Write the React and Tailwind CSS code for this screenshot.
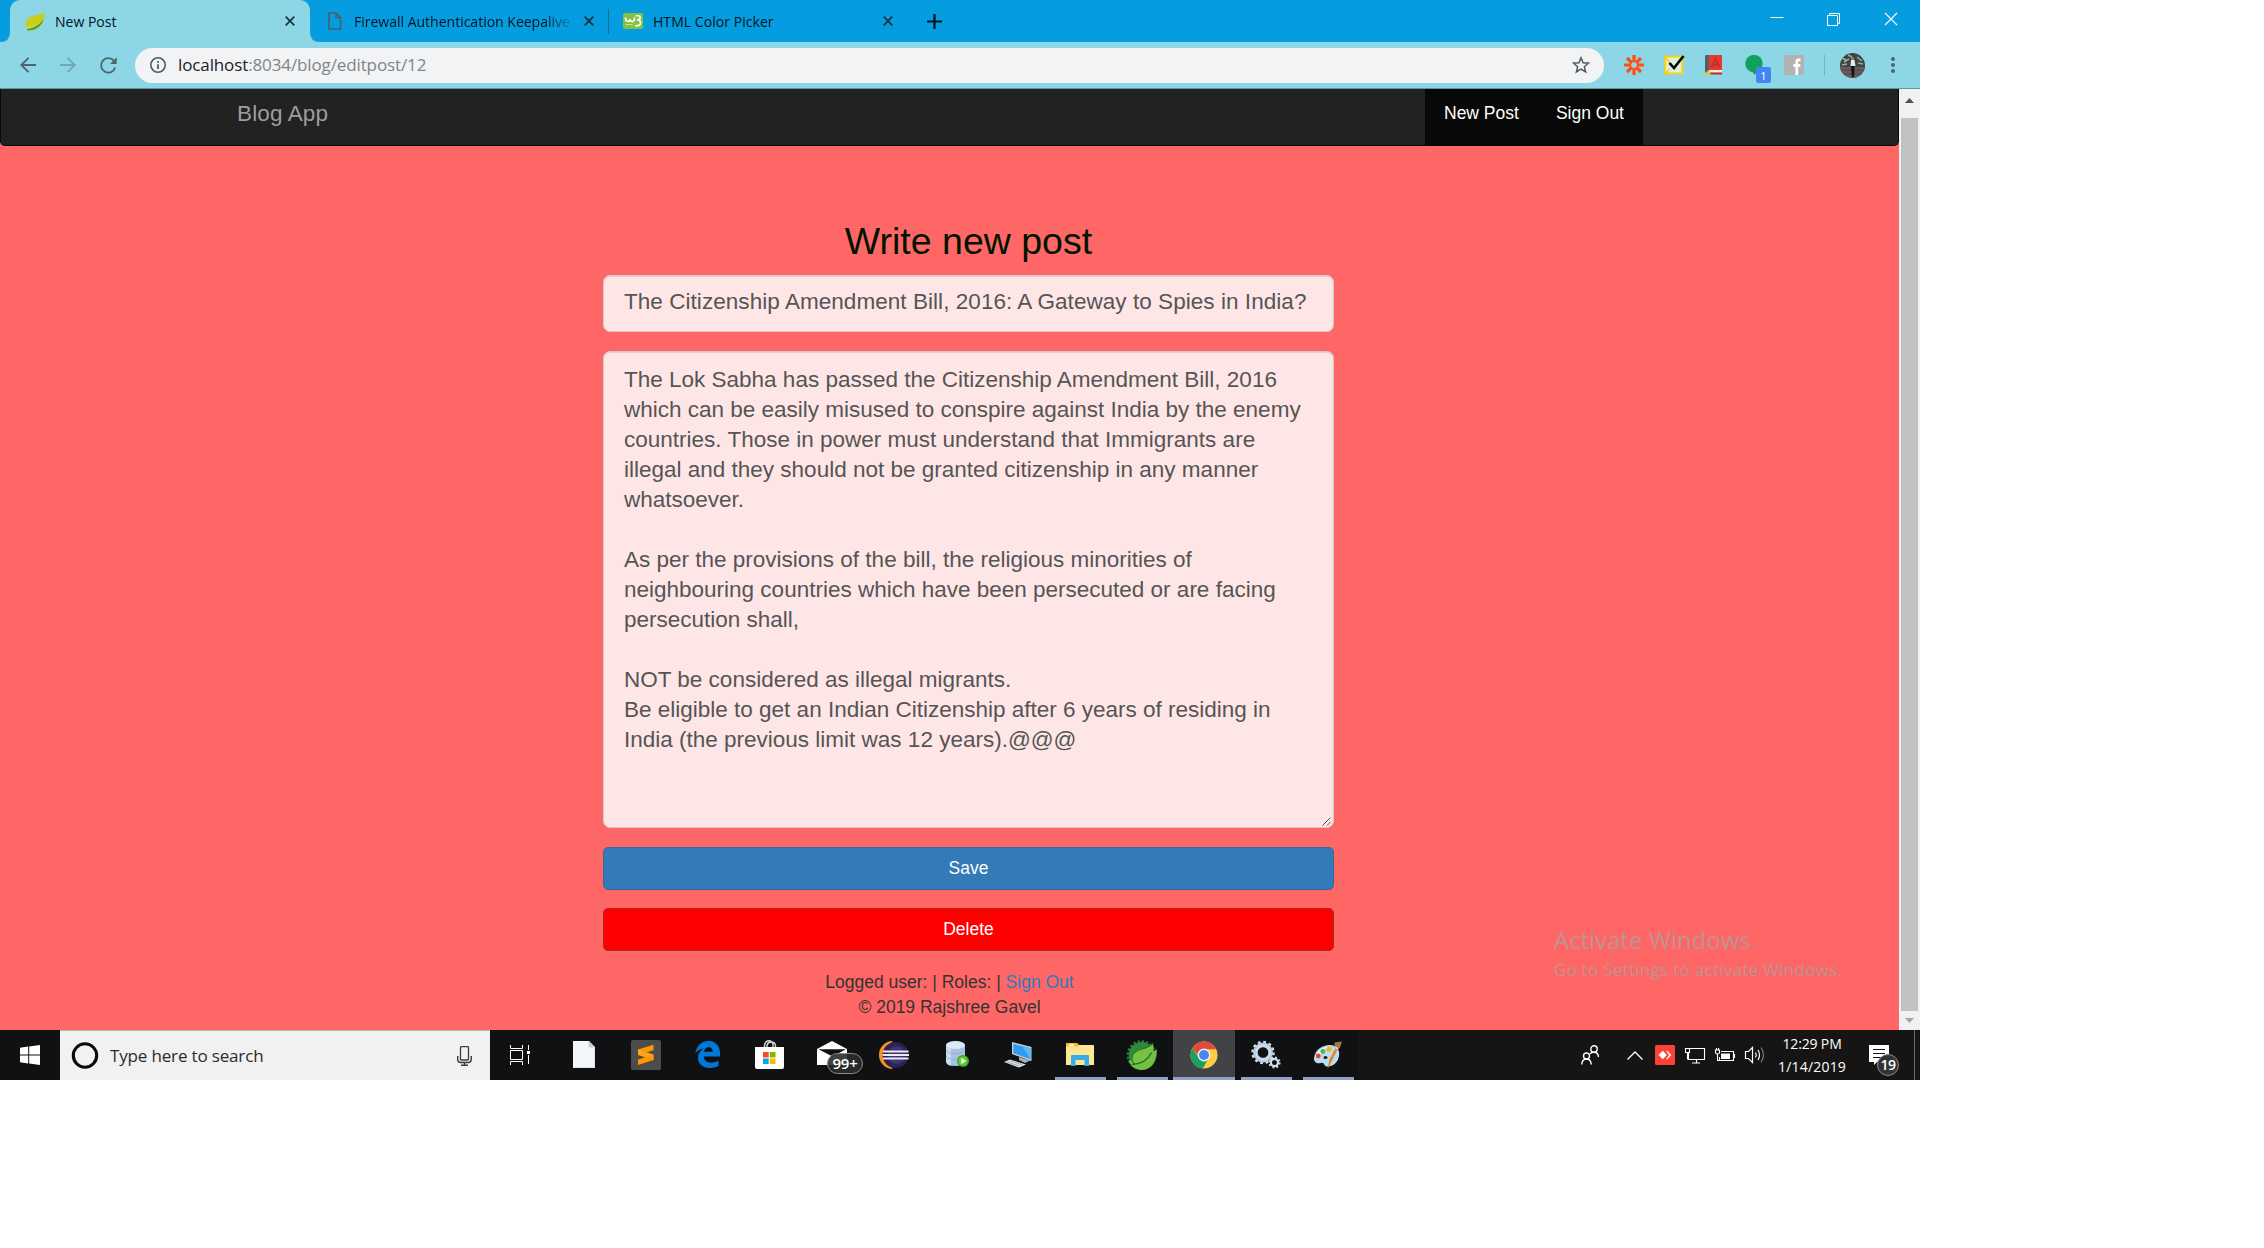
import React from "react";

const BODY_TEXT = `The Lok Sabha has passed the Citizenship Amendment Bill, 2016
which can be easily misused to conspire against India by the enemy
countries. Those in power must understand that Immigrants are
illegal and they should not be granted citizenship in any manner
whatsoever.

As per the provisions of the bill, the religious minorities of
neighbouring countries which have been persecuted or are facing
persecution shall,

NOT be considered as illegal migrants.
Be eligible to get an Indian Citizenship after 6 years of residing in
India (the previous limit was 12 years).@@@`;

function Svg({ w, h, className = "", children }) {
  return (
    <svg width={w} height={h} viewBox={`0 0 ${w} ${h}`} fill="none" className={`block shrink-0 overflow-visible ${className}`}>
      {children}
    </svg>
  );
}

function CloseX({ className }) {
  return (
    <Svg w={10} h={10} className={className}>
      <path d="M0.7 0.7 9.3 9.3M9.3 0.7 0.7 9.3" stroke="#17333d" strokeWidth="1.7" />
    </Svg>
  );
}

/* ---------- browser chrome ---------- */

function TabStrip() {
  return (
    <div className="flex h-[42px] items-stretch bg-[#059de0] text-[14px] text-[#04141c]">
      <div className="flex w-[10px] items-end">
        <Svg w={10} h={10}><path d="M10 0V10H0Q10 10 10 0Z" fill="#8dd6e6" /></Svg>
      </div>
      <div className="flex w-[300px] items-center rounded-t-[10px] bg-[#8dd6e6] pl-[15px]">
        <Svg w={20} h={20}>
          <path d="M19.500 1C17 3.500 13 3.500 9 4.500C3 6 0 9.500 1 14C1.500 17 3 18.500 6 18.500C14 19 20.500 12 19.500 1Z" fill="#c3d01c" />
          <path d="M1.500 18C9 17.500 14 14 18.500 8C16.500 15.500 10.500 20 2.500 19.500Z" fill="#5f9a22" />
          <path d="M2.500 16.500C8 16 12 14 15.500 10.500" stroke="#e0e45a" strokeWidth="0.8" />
        </Svg>
        <span className="ml-[10px] w-[230px]">New Post</span>
        <CloseX />
      </div>
      <div className="flex w-[300px] items-center">
        <div className="flex h-full w-[10px] items-end">
          <Svg w={10} h={10}><path d="M0 0V10H10Q0 10 0 0Z" fill="#8dd6e6" /></Svg>
        </div>
        <Svg w={14} h={18} className="ml-[8px]">
          <path d="M1 1H8L12.500 5.500V17H1ZM8 1V5.500H12.500" stroke="#4c5e68" strokeWidth="1.6" />
        </Svg>
        <span className="ml-[12px] w-[218px] overflow-hidden whitespace-nowrap bg-gradient-to-r from-[#04141c] from-88% to-[#0590ce] bg-clip-text text-transparent">
          Firewall Authentication Keepalive
        </span>
        <CloseX className="ml-[12px]" />
        <div className="ml-[14px] h-[25px] w-px bg-[#08719e]" />
      </div>
      <div className="flex w-[302px] items-center pl-[13px]">
        <div className="flex h-[16px] w-[20px] flex-col items-center overflow-hidden rounded-[2px] bg-[#84c341]">
          <Svg w={20} h={16}>
            <path d="M2.500 4.500Q2.500 8.500 5 8.500Q7 8.500 7 6Q7 8.500 9.500 8.500Q11.500 8.500 11.500 4.500M12.500 2.800H15.500Q17.800 3.200 17 5.500L15 6.800Q18 7.500 17.500 10.500Q17 13 12 12.800" stroke="#fff" strokeWidth="1.6" />
            <path d="M3 11.500H10" stroke="#dcefc4" strokeWidth="1.200" strokeDasharray="1.200 0.500" />
          </Svg>
        </div>
        <span className="ml-[10px] w-[230px] whitespace-nowrap tracking-[0.05px]">HTML Color Picker</span>
        <CloseX />
      </div>
      <div className="flex flex-1 items-center pl-[15px]">
        <Svg w={15} h={15}><path d="M7.500 0V15M0 7.500H15" stroke="#04141c" strokeWidth="2.200" /></Svg>
      </div>
      <div className="flex h-[37px] items-center gap-[43px] pr-[22px]">
        <Svg w={14} h={14}><path d="M0.500 5.500H13.500" stroke="#fff" /></Svg>
        <Svg w={14} h={14}>
          <path d="M0.500 3.500H10.500V13.500H0.500ZM2.500 3.500V1.500H12.500V11.500H10.500" stroke="#fff" />
        </Svg>
        <Svg w={14} h={14}><path d="M1 1 13 13M13 1 1 13" stroke="#fff" strokeWidth="1.100" /></Svg>
      </div>
    </div>
  );
}

function Toolbar() {
  return (
    <div className="flex h-[47px] items-center border-b border-[#5b97a4] bg-[#8dd6e6] pl-[20px]">
      <Svg w={16} h={16}><path d="M8.500 0.800 1.300 8 8.500 15.200M1.300 8H16" stroke="#4d666e" strokeWidth="1.900" /></Svg>
      <Svg w={16} h={16} className="ml-[24px]">
        <path d="M7.500 0.800 14.700 8 7.500 15.200M14.700 8H0" stroke="#72a8b5" strokeWidth="1.900" />
      </Svg>
      <Svg w={17} h={17} className="ml-[24px]">
        <path d="M13.800 3.700A7.200 7.200 0 1 0 15.200 10.500" stroke="#4d666e" strokeWidth="1.900" />
        <path d="M16.700 0.300V7H10Z" fill="#4d666e" />
      </Svg>
      <div className="ml-[18px] flex h-[35px] w-[1469px] items-center rounded-full bg-[#f1f3f5] pl-[15px] pr-[14px]">
        <Svg w={16} h={16}>
          <circle cx="8" cy="8" r="7.200" stroke="#55595d" strokeWidth="1.600" />
          <path d="M8 7.200V12M8 4V5.700" stroke="#55595d" strokeWidth="1.800" />
        </Svg>
        <span className="ml-[12px] flex-1 text-[17px] tracking-[-0.12px] text-[#808488]">
          <span className="text-[#202124]">localhost</span>:8034/blog/editpost/12
        </span>
        <Svg w={18} h={18}>
          <path d="M9 1.800 11 6.800 16.400 7.200 12.300 10.700 13.600 16 9 13.100 4.400 16 5.700 10.700 1.600 7.200 7 6.800Z" stroke="#55595d" strokeWidth="1.500" />
        </Svg>
      </div>
      <Svg w={20} h={20} className="ml-[20px]">
        <path d="M10 0V7M10 13V20M0 10H7M13 10H20M3 3 7.900 7.900M12.100 12.100 17 17M17 3 12.100 7.900M7.900 12.100 3 17" stroke="#ff4f12" strokeWidth="3.200" />
        <circle cx="10" cy="10" r="3.700" stroke="#ff4f12" strokeWidth="1.600" />
      </Svg>
      <Svg w={20} h={20} className="ml-[20px]">
        <rect x="1" y="1.500" width="17.500" height="17" fill="#ddf0d8" stroke="#f6d11c" strokeWidth="2" />
        <path d="M1 2 6 8M1 18.500 6 14" stroke="#f6d11c" strokeWidth="1.500" />
        <path d="M5.500 8 10 13 19.500 1" stroke="#000" strokeWidth="2.600" />
      </Svg>
      <Svg w={18} h={20} className="ml-[21px]">
        <path d="M0 1Q0 0 1 0H4V20H0Z" fill="#55616a" />
        <path d="M4 0H17V15H4Z" fill="#e63a30" />
        <path d="M4 15H17V17.500H5Z" fill="#f7efe4" />
        <path d="M4 17.500H17V19.500H4Z" fill="#c62a23" />
        <path d="M0 18 4 15 6 20H0Z" fill="#ecc534" />
        <path d="M6.500 12 10.500 4 14.500 12M8 9.500H13" stroke="#c22c25" strokeWidth="1.600" />
      </Svg>
      <div className="relative ml-[22px] h-[20px] w-[20px]">
        <Svg w={20} h={20}>
          <circle cx="9" cy="8.500" r="8.700" fill="#12a05c" />
          <path d="M6 14H14L9.500 20Z" fill="#12a05c" />
        </Svg>
        <span className="absolute left-[11px] top-[12px] flex h-[16px] w-[15px] items-center justify-center rounded-[2px] bg-[#4285f4] text-[11px] leading-none text-white">1</span>
      </div>
      <Svg w={20} h={20} className="ml-[19px]">
        <rect width="20" height="20" fill="#b2b2b2" />
        <path d="M16.500 4.800H14.500Q12.800 4.800 12.800 6.800V20M9.300 10.500H16.300" stroke="#fff" strokeWidth="2.800" />
      </Svg>
      <div className="ml-[20px] h-[20px] w-px bg-[#6fb5c4]" />
      <Svg w={25} h={25} className="ml-[15px]">
        <clipPath id="avatar"><circle cx="12.500" cy="12.500" r="12.500" /></clipPath>
        <g clipPath="url(#avatar)">
          <rect width="25" height="25" fill="#3c4540" />
          <path d="M0 14H25V25H0Z" fill="#6b5a60" />
          <path d="M2 5 6 7M4 9 9 6M17 4 22 8M18 10 23 11M8 2 12 4M2 12 7 11" stroke="#9eaaa4" strokeWidth="1.500" />
          <path d="M0 17H25M0 21H25" stroke="#4b4048" strokeWidth="1" />
          <path d="M11 7H14.500L15.500 13H10.500Z" fill="#e8e8ea" />
          <circle cx="12.500" cy="5.500" r="1.600" fill="#a87c6b" />
          <path d="M11 13H14.500L14 24H12Z" fill="#111" />
        </g>
      </Svg>
      <Svg w={4} h={16} className="ml-[26px]">
        <circle cx="2" cy="2" r="2" fill="#4d666e" />
        <circle cx="2" cy="8" r="2" fill="#4d666e" />
        <circle cx="2" cy="14" r="2" fill="#4d666e" />
      </Svg>
    </div>
  );
}

/* ---------- page ---------- */

function BlogPage() {
  return (
    <div className="relative flex w-[1899px] flex-col bg-[#ff6666] font-['Liberation_Sans',Arial,sans-serif] text-[17.5px]">
      <nav className="flex h-[57px] rounded-b-[5px] border-x border-b border-[#080808] bg-[#222222]">
        <span className="ml-[236px] w-[1188px] pt-[9px] text-[22.5px] leading-[32px] tracking-[0.12px] text-[#9d9d9d]">Blog App</span>
        <div className="flex w-[218px] bg-[#080808] pt-[12px] leading-[25px] text-white">
          <span className="pl-[19px] pr-[18px]">New Post</span>
          <span className="pl-[19px]">Sign Out</span>
        </div>
      </nav>

      <main className="ml-[603px] mt-[74px] flex w-[731px] flex-col">
        <h1 className="text-center text-[37.5px] leading-[42px] text-[#001400]">Write new post</h1>
        <div className="mt-[13px] h-[57px] rounded-[7px] border border-[#cccccc] bg-[#ffe6e6] pl-[20px] pt-[11px] text-[22.5px] leading-[30px] tracking-[0.05px] text-[#555555] shadow-[inset_0_1px_1px_rgba(0,0,0,0.12)]">
          The Citizenship Amendment Bill, 2016: A Gateway to Spies in India?
        </div>
        <div className="relative mt-[19px] h-[477px] whitespace-pre rounded-[7px] border border-[#cccccc] bg-[#ffe6e6] pl-[20px] pt-[13px] text-[22.5px] leading-[30px] text-[#555555] shadow-[inset_0_1px_1px_rgba(0,0,0,0.12)]">
          {BODY_TEXT}
          <Svg w={9} h={9} className="absolute bottom-px right-[2px]">
            <path d="M0.500 8.500 8.500 0.500M5 8.500 8.500 5" stroke="#555" />
          </Svg>
        </div>
        <button className="mt-[19px] h-[43px] rounded-[5px] border border-[#2e6da4] bg-[#337ab7] pb-[1px] text-white">Save</button>
        <button className="mt-[18px] h-[43px] rounded-[5px] border border-[#a02c2c] bg-[#ff0000] pb-[1px] text-white">Delete</button>
      </main>

      <footer className="mt-[19px] text-center leading-[25px] text-[#333333]">
        <div>Logged user: | Roles: | <span className="text-[#337ab7]">Sign Out</span></div>
        <div>© 2019 Rajshree Gavel</div>
      </footer>

      <div className="absolute left-[1554px] top-[834px] whitespace-nowrap font-['Open_Sans','Noto_Sans',sans-serif] text-[#bd9393]">
        <div className="text-[24px] leading-[34px]">Activate Windows</div>
        <div className="text-[17px] leading-[26px] tracking-[0.28px]">Go to Settings to activate Windows.</div>
      </div>
    </div>
  );
}

function Scrollbar() {
  return (
    <div className="flex w-[21px] flex-col items-center bg-[#f1f1f1]">
      <div className="flex h-[29px] items-start pt-[9px]">
        <Svg w={9} h={5}><path d="M0 5 4.500 0 9 5Z" fill="#505050" /></Svg>
      </div>
      <div className="h-[893px] w-[17px] bg-[#c1c1c1]" />
      <Svg w={9} h={5} className="mt-[7px]"><path d="M0 0H9L4.500 5Z" fill="#a3a3a3" /></Svg>
    </div>
  );
}

/* ---------- taskbar ---------- */

function TaskViewIcon() {
  return (
    <Svg w={20} h={20} className="mr-[4px]">
      <path d="M0.500 5.500H12.500V14.500H0.500ZM0.500 0V3.500M12.500 0V3.500M0.500 3.500H12.500M0.500 16.500H12.500M0.500 16.500V20M12.500 16.500V20M18.500 0V5M18.500 10V19" stroke="#fff" />
      <rect x="17" y="6" width="3" height="3" fill="#fff" />
    </Svg>
  );
}

function DocIcon() {
  return (
    <Svg w={22} h={27}>
      <path d="M0 0H16L22 6V27H0Z" fill="#f4f6f8" />
      <path d="M15.500 0V6.500H22Z" fill="#c9cdd1" />
      <path d="M0.500 26.500H21.500V7" stroke="#dde1e4" />
    </Svg>
  );
}

function SublimeIcon() {
  return (
    <Svg w={30} h={30}>
      <rect width="30" height="30" rx="2" fill="#4c4c4c" />
      <path d="M7 9.500 22.500 4.800V10.300L7 15Z" fill="#ff9800" />
      <path d="M7 9.500V15L22.500 20V14.500Z" fill="#ffa41c" />
      <path d="M7 19.500 22.500 14.700V20L7 25Z" fill="#ff9800" />
    </Svg>
  );
}

function EdgeIcon() {
  return (
    <Svg w={25} h={27} className="mr-[2px]">
      <path
        d="M0.300 12.500C1.500 4.500 7 0 13.500 0C20.500 0 25 4.800 25 12V15.500H8.800C9 19.500 12 21.700 16 21.700C19 21.700 21.600 20.900 23.400 19.800V25C21 26.300 18 27 14.700 27C7.500 27 3 22.800 3 16.800C3 12.500 5.500 9.200 9.300 7.500C5.500 7.800 2.200 9.500 0.300 12.500ZM9 10.700H17.700C17.700 7.700 16.200 6.200 13.700 6.200C11.200 6.200 9.400 8 9 10.700Z"
        fill="#0078d7"
      />
    </Svg>
  );
}

function StoreIcon() {
  return (
    <Svg w={29} h={29} className="mr-px">
      <path d="M9.500 8V5Q10.500 0.800 14 0.800Q17 0.800 18 4V8M12 8V5Q13 2 16 2Q20 2 20.500 5.500V8" stroke="#d8d8d8" strokeWidth="1.400" />
      <path d="M0 7H29V27Q29 29 27 29H2Q0 29 0 27Z" fill="#fff" />
      <path d="M8 12H13.700V17.500H8Z" fill="#f25022" />
      <path d="M14.800 12H20.500V17.500H14.800Z" fill="#7fba00" />
      <path d="M8 18.500H13.700V24H8Z" fill="#00a4ef" />
      <path d="M14.800 18.500H20.500V24H14.800Z" fill="#ffb900" />
    </Svg>
  );
}

function MailIcon() {
  return (
    <div className="relative h-[28px] w-[30px]">
      <Svg w={30} h={24}>
        <path d="M0 8 15 0 30 8V24H0Z" fill="#fff" />
        <path d="M1.500 8.200H29L15.500 15.500Z" fill="#111" />
      </Svg>
      <span className="absolute left-[10px] top-[12px] flex h-[21px] w-[36px] items-center justify-center rounded-full border border-[#8c8c8c] bg-[#2c2c2ce6] text-[15px] font-semibold leading-none tracking-[-0.3px] text-white">99+</span>
    </div>
  );
}

function EclipseIcon() {
  return (
    <Svg w={30} h={28}>
      <path d="M14 0A14 14 0 0 0 14 28A18 18 0 0 1 14 0Z" fill="#f7941e" />
      <circle cx="16.500" cy="14" r="13" fill="#2c2255" />
      <circle cx="17.500" cy="14" r="9" fill="#3f3475" />
      <path d="M4 10.500H29.500M3.500 14H30M4 17.500H29.500" stroke="#eceaf5" strokeWidth="2" />
    </Svg>
  );
}

function DatabaseIcon() {
  return (
    <Svg w={23} h={27} className="ml-[3px]">
      <path d="M0 4V21Q1 25 9.500 25Q18 25 19 21V4Z" fill="#a9c2e2" />
      <path d="M0 4V21Q1 24 5 24.700V5Z" fill="#c9dbf0" />
      <ellipse cx="9.500" cy="4" rx="9.500" ry="4" fill="#dce9f6" />
      <path d="M0 9Q2 12.500 9.500 12.500Q17 12.500 19 9M0 15Q2 18.500 9.500 18.500Q17 18.500 19 15" stroke="#8fabcf" strokeWidth="0.800" />
      <circle cx="17" cy="20" r="6" fill="#39a81e" />
      <circle cx="17" cy="20" r="4.500" fill="#62cf35" />
      <path d="M15.300 17 20 20 15.300 23Z" fill="#fff" />
    </Svg>
  );
}

function ComputerIcon() {
  return (
    <Svg w={28} h={26}>
      <path d="M8 0 27.500 5V19L8 12Z" fill="#c9d2da" />
      <path d="M9.300 1.800 26.500 6.200V17.200L9.300 11.200Z" fill="#2f9cf0" />
      <path d="M18 3.800 26.500 6.200V17.200Z" fill="#58baf8" />
      <path d="M15 15 21 17 27 18 21 21 15 18Z" fill="#a6afb6" />
      <path d="M0 20 6 17.500 22 22.500 15 25.500Z" fill="#e1e5e8" />
      <path d="M3 20 15 24M6 18.800 18 22.800" stroke="#8f989f" strokeWidth="0.800" />
    </Svg>
  );
}

function FolderIcon() {
  return (
    <Svg w={28} h={24}>
      <path d="M0 1Q0 0 1 0H11L13 2H27Q28 2 28 3V22H0Z" fill="#ffe794" />
      <path d="M0 1Q0 0 1 0H11L13 3.500H0Z" fill="#f3bd27" />
      <path d="M3 1.500H8V3H3Z" fill="#fff" />
      <path d="M5 13Q5 12 6 12H22Q23 12 23 13V23H18.500V17H9.500V23H5Z" fill="#39ace4" />
    </Svg>
  );
}

function SpringIcon() {
  return (
    <Svg w={30} h={30}>
      <circle cx="14.500" cy="15" r="13.300" stroke="#2a7c36" strokeWidth="3" strokeDasharray="2.300 1.870" />
      <circle cx="14.800" cy="15" r="13" fill="#31893b" />
      <path d="M29.500 9C31 18 26 30 15 30C8 30 3 26 1.500 20Q15 23 29.500 9Z" fill="#71c045" />
      <path d="M26 3.500C19 11 6.500 7.500 5 17.500C4.500 21.500 7 24.500 11 24.500C22.500 25 28 14 26 3.500Z" fill="#79c143" />
      <path d="M5 24.500C14 24 21 20 24.500 12.500" stroke="#246f2c" strokeWidth="1.500" />
      <path d="M26 3.500C19 11 6.500 7.500 5 17.500C5 20.500 6 23 8 24" stroke="#27782f" strokeWidth="1.100" />
    </Svg>
  );
}

function ChromeIcon() {
  return (
    <Svg w={28} h={28}>
      <circle cx="14" cy="14" r="13.500" fill="#ffcd41" />
      <path d="M2.310 7.250A13.500 13.500 0 0 1 25.690 7.250L25.800 8.200H14L8.300 14.800Z" fill="#df4b3d" />
      <path d="M2.310 7.250A13.500 13.500 0 0 0 12.800 27.450L18.800 17L9 17Z" fill="#1aa15f" />
      <circle cx="14" cy="14" r="6.400" fill="#f4f4f4" />
      <circle cx="14" cy="14" r="5" fill="#4688f1" />
    </Svg>
  );
}

function GearsIcon() {
  return (
    <Svg w={30} h={28}>
      <circle cx="12" cy="11.500" r="10.500" stroke="#d5e1ee" strokeWidth="2.400" strokeDasharray="2.700 2.797" />
      <circle cx="12" cy="11.500" r="7.600" stroke="#b9cde2" strokeWidth="4.600" />
      <circle cx="12" cy="11.500" r="7" stroke="#e4edf5" strokeWidth="1" />
      <circle cx="23.500" cy="21.500" r="5.200" stroke="#cad9e8" strokeWidth="1.800" strokeDasharray="2 2.084" />
      <circle cx="23.500" cy="21.500" r="3.600" stroke="#d5e1ee" strokeWidth="2.200" />
    </Svg>
  );
}

function PaintIcon() {
  return (
    <Svg w={30} h={28}>
      <path d="M1 17C2 9 9 4 17 4C24 4 27 9 26 15C25 22 19 26 14 25.500C10 25 12 21 8 22C4 23 0.500 21 1 17Z" fill="#b9def2" />
      <path d="M3 15C5 8 12 5 18 5.500C12 7 7 11 6 18Z" fill="#e2f2fa" />
      <ellipse cx="12.500" cy="16.500" rx="2" ry="1.600" fill="#14181c" />
      <circle cx="5.300" cy="15" r="2.400" fill="#e8432f" />
      <circle cx="9.800" cy="10.500" r="2.400" fill="#55b435" />
      <circle cx="16" cy="8.300" r="2.600" fill="#f4b616" />
      <path d="M14.500 28 16.500 18 23 6 25 7.500 19 20Z" fill="#e6862b" />
      <path d="M21.500 1.500 29 0.500 27 6.500 24.500 9 21.500 6.500Z" fill="#a87845" />
      <path d="M22 6 25 8" stroke="#d6d6d6" strokeWidth="2" />
    </Svg>
  );
}

const APPS = [
  { Icon: TaskViewIcon },
  { Icon: DocIcon },
  { Icon: SublimeIcon },
  { Icon: EdgeIcon },
  { Icon: StoreIcon },
  { Icon: MailIcon },
  { Icon: EclipseIcon },
  { Icon: DatabaseIcon },
  { Icon: ComputerIcon },
  { Icon: FolderIcon, running: true },
  { Icon: SpringIcon, running: true },
  { Icon: ChromeIcon, running: true, active: true },
  { Icon: GearsIcon, running: true },
  { Icon: PaintIcon, running: true },
];

function AppButton({ Icon, running, active }) {
  return (
    <div className={`flex h-[50px] w-[62px] flex-col items-center ${active ? "bg-[#414346]" : ""}`}>
      <div className="flex h-[47px] items-center justify-center pt-[2px]"><Icon /></div>
      {running && <div className={`h-[3px] bg-[#8f9fc8] ${active ? "w-[62px]" : "w-[51px]"}`} />}
    </div>
  );
}

function Taskbar() {
  return (
    <div className="flex h-[50px] items-center bg-[#101113]">
      <div className="flex w-[60px] justify-center">
        <Svg w={20} h={20}>
          <path d="M0 2.800 8.200 1.600V9.400H0ZM9.200 1.400 20 0V9.400H9.200ZM0 10.400H8.200V18.400L0 17.200ZM9.200 10.400H20V20L9.200 18.600Z" fill="#fff" />
        </Svg>
      </div>
      <div className="flex h-[50px] w-[430px] items-center border-t border-[#b9b9b9] bg-[#f1f1f1] pl-[12px] pr-[18px]">
        <Svg w={26} h={26}><circle cx="13" cy="12.500" r="11.700" stroke="#0a0a0a" strokeWidth="3.100" /></Svg>
        <span className="ml-[12px] flex-1 text-[17px] tracking-[-0.16px] text-[#2b2b2b]">Type here to search</span>
        <Svg w={15} h={20}>
          <rect x="3.500" y="0.700" width="8" height="13.300" rx="0.800" stroke="#3c3c3c" strokeWidth="1.300" />
          <path d="M0.700 10V13Q0.700 16.500 4 16.500H11Q14.300 16.500 14.300 13V10M7.500 16.500V19M4 19.200H11" stroke="#3c3c3c" strokeWidth="1.400" />
        </Svg>
      </div>
      <div className="ml-px flex">
        {APPS.map((app, i) => <AppButton key={i} {...app} />)}
      </div>
      <div className="flex h-[50px] flex-1 items-center bg-[#171513] pl-[222px]">
        <Svg w={18} h={20}>
          <circle cx="13" cy="4" r="3.200" stroke="#fff" strokeWidth="1.400" />
          <circle cx="5.500" cy="11" r="3" stroke="#fff" strokeWidth="1.400" />
          <path d="M0.700 19.500Q1.200 14 5.500 14Q9.800 14 10.300 19.500M9 9Q10 7.300 13 7.300Q17 7.300 17.500 12" stroke="#fff" strokeWidth="1.400" />
        </Svg>
        <Svg w={16} h={9} className="ml-[28px]"><path d="M0.500 8.500 8 1 15.500 8.500" stroke="#fff" strokeWidth="1.300" /></Svg>
        <Svg w={20} h={20} className="ml-[12px]">
          <rect width="20" height="20" rx="1.500" fill="#fb4234" />
          <path d="M3.500 10 7.700 5.800 11.900 10 7.700 14.200ZM11 5.800H12.200L16.400 10 12.200 14.200H11L14 10Z" fill="#fff" />
        </Svg>
        <Svg w={20} h={17} className="ml-[10px]">
          <path d="M5 1.500H19.500V12.500H3.500V6M11.500 12.500V16M7 16H15M0.500 1.500H4.500V5.500H0.500ZM2.500 5.500V12.500" stroke="#fff" strokeWidth="1.100" />
        </Svg>
        <Svg w={20} h={15} className="ml-[10px]">
          <path d="M6 3.500H18.500V12.500H4.500V9M19.500 6V10M2.500 6.500V12.500H5M1.500 0V2M3.500 0V2M0.500 2H4.500V4.500Q4.500 6 2.500 6Q0.500 6 0.500 4.500Z" stroke="#fff" strokeWidth="1.100" />
          <path d="M6 5.500H15V11H6Z" fill="#fff" />
        </Svg>
        <Svg w={20} h={18} className="ml-[10px]">
          <path d="M0.500 5.500H3.500L7.500 1.500V16.500L3.500 12.500H0.500Z" stroke="#fff" strokeWidth="1.200" />
          <path d="M10.500 6.500Q12 9 10.500 11.500M13 4Q16 9 13 14" stroke="#fff" strokeWidth="1.200" />
          <path d="M16 1.500Q21 9 16 16.500" stroke="#777" strokeWidth="1.200" />
        </Svg>
        <div className="ml-[12px] w-[70px] whitespace-nowrap text-center text-[14px] leading-[23px] text-white">
          <div className="tracking-[-0.15px]">12:29 PM</div>
          <div className="tracking-[0.2px]">1/14/2019</div>
        </div>
        <div className="relative ml-[22px] h-[20px] w-[20px]">
          <Svg w={20} h={20}>
            <path d="M0 0H20V17H8L5 20V17H0Z" fill="#fff" />
            <path d="M4 4.500H16M4 8.500H16M4 12.500H12" stroke="#171513" strokeWidth="1.200" />
          </Svg>
          <span className="absolute left-[8px] top-[9px] flex h-[22px] w-[22px] items-center justify-center rounded-full border border-[#8c8c8c] bg-[#333333] text-[14px] font-semibold leading-none tracking-[-0.5px] text-white">19</span>
        </div>
        <div className="ml-[25px] h-[50px] w-px bg-[#6c6a69]" />
      </div>
    </div>
  );
}

export default function App() {
  return (
    <div className="h-[1248px] w-[2264px] overflow-hidden bg-white font-['Open_Sans','Noto_Sans',sans-serif]">
      <div className="flex h-[1080px] w-[1920px] flex-col">
        <TabStrip />
        <Toolbar />
        <div className="flex h-[941px]">
          <BlogPage />
          <Scrollbar />
        </div>
        <Taskbar />
      </div>
    </div>
  );
}
